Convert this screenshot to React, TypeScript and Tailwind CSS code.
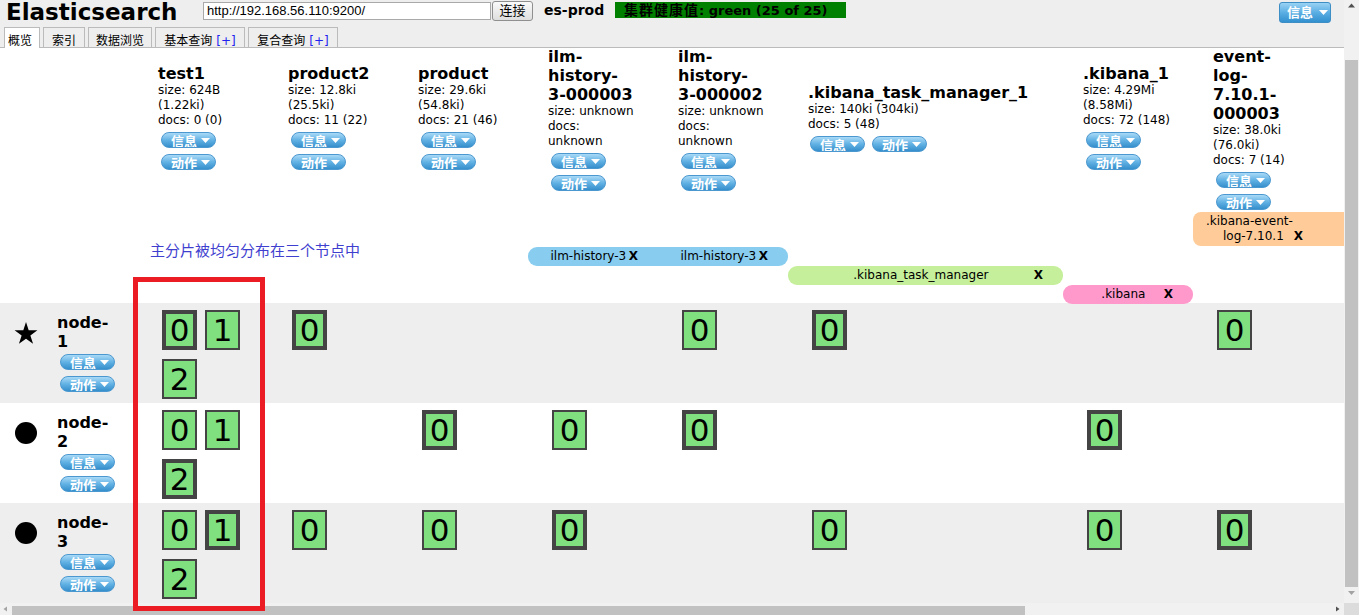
import React from 'react';

type Sh = { n: number; p?: boolean };
type Col = {
  w: string;
  pos: string;
  title: string[];
  info: string[];
  row?: boolean;
  shards: Sh[][];
};

const cols: Col[] = [
  {
    w: 'w-[130px]',
    pos: 'pt-[16px]',
    title: ['test1'],
    info: ['size: 624B', '(1.22ki)', 'docs: 0 (0)'],
    shards: [
      [{ n: 0, p: true }, { n: 1 }, { n: 2 }],
      [{ n: 0 }, { n: 1 }, { n: 2, p: true }],
      [{ n: 0 }, { n: 1, p: true }, { n: 2 }],
    ],
  },
  {
    w: 'w-[130px]',
    pos: 'pt-[16px]',
    title: ['product2'],
    info: ['size: 12.8ki', '(25.5ki)', 'docs: 11 (22)'],
    shards: [[{ n: 0, p: true }], [], [{ n: 0 }]],
  },
  {
    w: 'w-[130px]',
    pos: 'pt-[16px]',
    title: ['product'],
    info: ['size: 29.6ki', '(54.8ki)', 'docs: 21 (46)'],
    shards: [[], [{ n: 0, p: true }], [{ n: 0 }]],
  },
  {
    w: 'w-[130px]',
    pos: '-mt-[1px]',
    title: ['ilm-', 'history-', '3-000003'],
    info: ['size: unknown', 'docs:', 'unknown'],
    shards: [[], [{ n: 0 }], [{ n: 0, p: true }]],
  },
  {
    w: 'w-[130px]',
    pos: '-mt-[1px]',
    title: ['ilm-', 'history-', '3-000002'],
    info: ['size: unknown', 'docs:', 'unknown'],
    shards: [[{ n: 0 }], [{ n: 0, p: true }], []],
  },
  {
    w: 'w-[275px]',
    pos: 'pt-[35px]',
    title: ['.kibana_task_manager_1'],
    info: ['size: 140ki (304ki)', 'docs: 5 (48)'],
    row: true,
    shards: [[{ n: 0, p: true }], [], [{ n: 0 }]],
  },
  {
    w: 'w-[130px]',
    pos: 'pt-[16px]',
    title: ['.kibana_1'],
    info: ['size: 4.29Mi', '(8.58Mi)', 'docs: 72 (148)'],
    shards: [[], [{ n: 0, p: true }], [{ n: 0 }]],
  },
  {
    w: 'w-[130px]',
    pos: '-mt-[1px]',
    title: ['event-', 'log-', '7.10.1-', '000003'],
    info: ['size: 38.0ki', '(76.0ki)', 'docs: 7 (14)'],
    shards: [[{ n: 0 }], [], [{ n: 0, p: true }]],
  },
];

const Tri = ({ className = '' }: { className?: string }) => (
  <svg width="9" height="5" viewBox="0 0 9 5" className={className}>
    <path d="M0 0h9L4.5 5z" fill="white" />
  </svg>
);

function Pill({ label }: { label: string }) {
  return (
    <span className="flex h-[16px] w-[55px] shrink-0 items-start overflow-hidden rounded-full border border-[#4b98d0] bg-linear-to-b from-[#a9daf7] via-[#62b2e4] to-[#358fcb] pl-[9px] text-white">
      <span className="mt-[1px] text-[13px] leading-[15px] font-bold">{label}</span>
      <Tri className="ml-[4px] mt-[5px]" />
    </span>
  );
}

function Shard({ s }: { s: Sh }) {
  return (
    <div
      className={`flex h-[40px] w-[35px] items-center justify-center border-[#444] bg-[#80e080] text-[31px] leading-none text-black ${
        s.p ? 'border-[4px]' : 'border-[2px]'
      }`}
    >
      {s.n}
    </div>
  );
}

function Star() {
  return (
    <svg width="24" height="23" viewBox="0 0 22 21">
      <path d="M11 0L13.47 7.6L21.46 7.6L15 12.3L17.47 19.9L11 15.2L4.53 19.9L7 12.3L0.54 7.6L8.53 7.6Z" fill="black" />
    </svg>
  );
}

function AliasCell({ name, w }: { name: string; w: string }) {
  return (
    <div className={`${w} flex shrink-0 items-center px-[20px]`}>
      <span className="flex-1 text-center whitespace-nowrap">{name}</span>
      <span className="font-bold">X</span>
    </div>
  );
}

function Header() {
  return (
    <div className="relative z-10 flex h-[48px] shrink-0 flex-col border-b border-[#bbb] bg-[#eee]">
      <div className="flex h-[27px] items-start">
        <div className="ml-[6px] w-[197px] -mt-[2px] text-[23px] leading-[28px] font-bold text-black">Elasticsearch</div>
        <div className="mt-[2px] h-[18px] w-[288px] border border-[#a9a9a9] bg-white pl-[3px] font-['Liberation_Sans',sans-serif] text-[13px] leading-[16px] text-black">
          http://192.168.56.110:9200/
        </div>
        <div className="ml-[1px] mt-[1px] flex h-[20px] w-[41px] items-center justify-center rounded-[3px] border border-[#8f8f8f] bg-linear-to-b from-[#fafafa] to-[#dedede] text-[13px] text-black">
          连接
        </div>
        <div className="ml-[11px] w-[71px] mt-[2px] text-[14px] leading-[17px] font-bold text-black">es-prod</div>
        <div className="mt-[2px] h-[16px] w-[231px] bg-[#008000] pl-[9px] text-[13px] leading-[16px] font-bold whitespace-nowrap text-black">
          <span className="text-[14px] tracking-[1px]">集群健康值</span>: green (25 of 25)
        </div>
        <div className="ml-auto mr-[13px] mt-[2px] flex h-[21px] w-[52px] items-center rounded-[3px] border border-[#3e8ec6] bg-linear-to-b from-[#99d2f4] via-[#5aaee3] to-[#3290cf] pl-[7px] text-white">
          <span className="text-[13px] leading-[15px] font-bold">信息</span>
          <Tri className="ml-[6px]" />
        </div>
      </div>
      <div className="flex h-[20px] items-end gap-[3px] pl-[4px] text-[12px] leading-[14px] text-black">
        <div className="-mb-[1px] flex h-[21px] w-[36px] justify-start border border-b-0 border-[#bbb] bg-white pl-[3px] pt-[6px]">概览</div>
        <div className="flex h-[20px] w-[42px] justify-center border border-b-0 border-[#bbb] pt-[6px]">索引</div>
        <div className="flex h-[20px] w-[64px] justify-center border border-b-0 border-[#bbb] pt-[6px]">数据浏览</div>
        <div className="flex h-[20px] w-[90px] justify-center border border-b-0 border-[#bbb] pt-[6px] whitespace-nowrap">
          基本查询<span className="ml-[4px] text-[#2222ee]">[+]</span>
        </div>
        <div className="flex h-[20px] w-[90px] justify-center border border-b-0 border-[#bbb] pt-[6px] whitespace-nowrap">
          复合查询<span className="ml-[4px] text-[#2222ee]">[+]</span>
        </div>
      </div>
    </div>
  );
}

function IndexHeads() {
  return (
    <div className="flex h-[162px]">
      <div className="w-[138px] shrink-0" />
      {cols.map((c, i) => (
        <div key={i} className={`${c.w} ${c.pos} shrink-0 pl-[20px] text-black`}>
          {c.title.map((t, j) => (
            <div key={j} className="text-[16px] leading-[19px] font-bold whitespace-nowrap">
              {t}
            </div>
          ))}
          {c.info.map((t, j) => (
            <div key={j} className="text-[12px] leading-[15px] whitespace-nowrap">
              {t}
            </div>
          ))}
          <div className={c.row ? 'mt-[4px] flex gap-[7px] pl-[2px]' : 'mt-[4px] flex flex-col gap-[6px] pl-[3px]'}>
            <Pill label="信息" />
            <Pill label="动作" />
          </div>
        </div>
      ))}
    </div>
  );
}

function Aliases() {
  return (
    <div className="flex flex-col text-[12px] leading-[15px] text-black">
      <div className="flex h-[37px]">
        <div className="w-[1193px] shrink-0" />
        <div className="mt-[2px] flex h-[34px] w-[300px] shrink-0 rounded-l-[8px] bg-[#ffcc99]">
          <div className="flex w-[130px] shrink-0 items-end px-[20px] pb-[2px]">
            <div className="flex-1 text-center">
              <div className="-ml-[8px] whitespace-nowrap">.kibana-event-</div>
              <div className="whitespace-nowrap">log-7.10.1</div>
            </div>
            <span className="font-bold">X</span>
          </div>
        </div>
      </div>
      <div className="flex h-[19px]">
        <div className="w-[528px] shrink-0" />
        <div className="flex w-[260px] shrink-0 rounded-[9px] bg-[#88cdef]">
          <AliasCell name="ilm-history-3" w="w-[130px]" />
          <AliasCell name="ilm-history-3" w="w-[130px]" />
        </div>
      </div>
      <div className="flex h-[19px]">
        <div className="w-[788px] shrink-0" />
        <div className="flex w-[275px] shrink-0 rounded-[9px] bg-[#c5ef9a]">
          <AliasCell name=".kibana_task_manager" w="w-[275px]" />
        </div>
      </div>
      <div className="flex h-[18px]">
        <div className="w-[1063px] shrink-0" />
        <div className="flex h-[19px] w-[130px] shrink-0 rounded-[9px] bg-[#ff99cc]">
          <AliasCell name=".kibana" w="w-[130px]" />
        </div>
      </div>
    </div>
  );
}

function NodeRow({ idx, master }: { idx: number; master?: boolean }) {
  return (
    <div className={`flex h-[100px] shrink-0 ${idx % 2 === 0 ? 'bg-[#eeeeee]' : 'bg-white'}`}>
      <div className="flex w-[138px] shrink-0">
        <div className="w-[57px] shrink-0 pl-[14px] pt-[19px]">
          {master ? <Star /> : <div className="ml-[1px] h-[22px] w-[22px] rounded-full bg-black" />}
        </div>
        <div className="pt-[10px] text-black">
          <div className="text-[16px] leading-[19px] font-bold">node-</div>
          <div className="text-[16px] leading-[19px] font-bold">{idx + 1}</div>
          <div className="mt-[3px] flex flex-col gap-[6px] pl-[3px]">
            <Pill label="信息" />
            <Pill label="动作" />
          </div>
        </div>
      </div>
      {cols.map((c, i) => (
        <div key={i} className={`${c.w} flex shrink-0 flex-wrap content-start gap-x-[8px] gap-y-[9px] pl-[24px] pr-[12px] pt-[7px]`}>
          {c.shards[idx].map((s, j) => (
            <Shard key={j} s={s} />
          ))}
        </div>
      ))}
    </div>
  );
}

export default function App() {
  return (
    <div className="relative flex h-[615px] w-[1359px] overflow-hidden bg-white font-['DejaVu_Sans','Noto_Sans_CJK_SC',sans-serif]">
      <div className="flex w-[1344px] shrink-0 flex-col">
        <Header />
        <div className="flex-1 overflow-hidden">
          <div className="w-[1800px]">
            <IndexHeads />
            <Aliases />
            <NodeRow idx={0} master />
            <NodeRow idx={1} />
            <NodeRow idx={2} />
          </div>
        </div>
        {/* horizontal scrollbar */}
        <div className="flex h-[12px] shrink-0 items-center bg-[#f1f1f1]">
          <svg width="12" height="12" viewBox="0 0 12 12" className="shrink-0">
            <path d="M7 3.5L3.5 6L7 8.5Z" fill="#a3a3a3" />
          </svg>
          <div className="mt-[2px] h-[9px] w-[1013px] bg-[#c1c1c1]" />
          <div className="flex-1" />
          <svg width="12" height="12" viewBox="0 0 12 12" className="shrink-0">
            <path d="M4 3.5L7.5 6L4 8.5Z" fill="#505050" />
          </svg>
        </div>
      </div>
      {/* vertical scrollbar */}
      <div className="flex w-[15px] shrink-0 flex-col bg-[#f1f1f1]">
        <svg width="15" height="12" viewBox="0 0 15 12" className="shrink-0">
          <path d="M4 7.5L7.5 3.5L11 7.5Z" fill="#505050" />
        </svg>
        <div className="ml-[1px] mt-[48px] h-[527px] w-[13px] bg-[#c1c1c1]" />
        <svg width="15" height="12" viewBox="0 0 15 12" className="shrink-0">
          <path d="M4 4L11 4L7.5 8Z" fill="#a3a3a3" />
        </svg>
        <div className="flex-1" />
        <div className="h-[12px] bg-[#dcdcdc]" />
      </div>
      {/* annotation */}
      <div className="absolute left-[150px] top-[242px] text-[15px] leading-[18px] text-[#3f3fcf]">主分片被均匀分布在三个节点中</div>
      <div className="absolute left-[133px] top-[277px] h-[334px] w-[132px] border-[5px] border-[#ec1c24]" />
    </div>
  );
}
